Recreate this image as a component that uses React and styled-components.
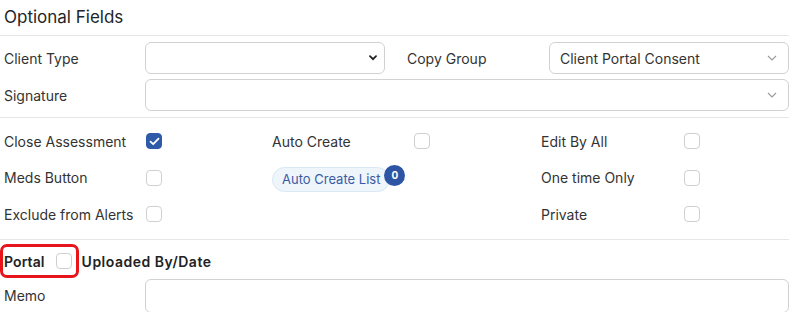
import React from 'react'
import styled, { createGlobalStyle } from 'styled-components'

const GlobalStyle = createGlobalStyle`
  * { box-sizing: border-box; }
  body {
    margin: 0;
    background: #ffffff;
    font-family: Inter, "Noto Sans", sans-serif;
    color: #333333;
    overflow: hidden;
  }
`

const Panel = styled.div`
  width: 792px;
  height: 312px;
  padding: 0 3px 0 0;
`

const Title = styled.h2`
  margin: 0;
  height: 36px;
  padding: 7px 0 0 4px;
  font-size: 17px;
  font-weight: 400;
  color: #212529;
  border-bottom: 1px solid #e6e6e6;
`

const FieldGrid = styled.div`
  display: grid;
  grid-template-columns: 141px 240px 164px 240px;
  row-gap: 5px;
  padding: 6px 0 6px 4px;
  border-bottom: 1px solid #e6e6e6;
`

const Label = styled.span`
  display: flex;
  align-items: center;
  font-size: 14px;
  color: #333;
  padding-left: ${({ $indent }) => $indent || 0}px;
  width: ${({ $w }) => ($w ? `${$w}px` : 'auto')};
  flex-shrink: 0;
`

const SelectBox = styled.div`
  grid-column: ${({ $span }) => $span || 'auto'};
  height: 32px;
  border: 1px solid #d2d2d2;
  border-radius: 6px;
  background: #fff;
  display: flex;
  align-items: center;
  justify-content: space-between;
  padding: 0 ${({ $pr }) => $pr || 11}px 0 10px;
  font-size: 14px;
  color: #333;
`

const CheckSection = styled.div`
  display: grid;
  grid-template-columns: 268px 269px 1fr;
  grid-auto-rows: 36.5px;
  padding: 5px 0 6px 4px;
  border-bottom: 1px solid #e6e6e6;
`

const Cell = styled.div`
  display: flex;
  align-items: center;
`

const Box = styled.span`
  width: 16px;
  height: 16px;
  border-radius: 4px;
  border: 1px solid ${({ $on }) => ($on ? '#2f5aa8' : '#cfcfcf')};
  background: ${({ $on }) => ($on ? '#2f5aa8' : '#fff')};
  display: inline-flex;
  align-items: center;
  justify-content: center;
  flex-shrink: 0;
`

const Pill = styled.span`
  position: relative;
  display: inline-flex;
  align-items: center;
  height: 25px;
  padding: 0 9px 0 9px;
  border-radius: 13px;
  background: #eef5fb;
  border: 1px solid #d9e8f4;
  font-size: 13px;
  color: #3b5ba5;
  margin-top: 3px;
`

const Badge = styled.span`
  position: absolute;
  top: -3px;
  right: -16px;
  width: 21px;
  height: 21px;
  border-radius: 50%;
  background: #2d55a4;
  color: #fff;
  font-size: 10px;
  font-weight: 700;
  display: flex;
  align-items: center;
  justify-content: center;
`

const PortalRow = styled.div`
  display: flex;
  align-items: center;
  gap: 3px;
  padding-top: 4px;
  height: 39px;
`

const Highlight = styled.div`
  display: inline-flex;
  align-items: center;
  height: 34px;
  border: 3px solid #e8141c;
  border-radius: 7px;
  padding: 0 4px 0 1px;
  gap: 11px;
`

const Strong = styled.span`
  font-size: 14px;
  font-weight: 600;
  color: #222;
  letter-spacing: ${({ $wide }) => ($wide ? '0.5px' : '0.1px')};
`

const MemoRow = styled.div`
  display: grid;
  grid-template-columns: 141px 1fr;
  padding-left: 4px;
  height: 33px;
`

const TextInput = styled.div`
  border: 1px solid #d2d2d2;
  border-radius: 6px;
  height: 34px;
  background: #fff;
`

const Chevron = ({ dark }) =>
  dark ? (
    <svg width="8" height="6" viewBox="0 0 8 6">
      <path d="M1 1.2 L4 4.2 L7 1.2" fill="none" stroke="#222" strokeWidth="1.8" strokeLinecap="round" />
    </svg>
  ) : (
    <svg width="10" height="6" viewBox="0 0 10 6">
      <path d="M1 1 L5 5 L9 1" fill="none" stroke="#9a9a9a" strokeWidth="1.1" />
    </svg>
  )

const Check = ({ on }) => (
  <Box $on={on}>
    {on && (
      <svg width="11" height="9" viewBox="0 0 11 9">
        <path d="M1.5 4.6 L4.2 7.2 L9.5 1.6" fill="none" stroke="#fff" strokeWidth="1.8" strokeLinecap="round" strokeLinejoin="round" />
      </svg>
    )}
  </Box>
)

const CheckField = ({ label, on, w = 142 }) => (
  <Cell>
    <Label $w={w}>{label}</Label>
    <Check on={on} />
  </Cell>
)

const App = () => {
  return (
    <Panel>
      <GlobalStyle />
      <Title>Optional Fields</Title>

      <FieldGrid>
        <Label>Client Type</Label>
        <SelectBox $pr={7}>
          <span />
          <Chevron dark />
        </SelectBox>
        <Label $indent={22}>Copy Group</Label>
        <SelectBox>
          <span>Client Portal Consent</span>
          <Chevron />
        </SelectBox>

        <Label>Signature</Label>
        <SelectBox $span="2 / 5">
          <span />
          <Chevron />
        </SelectBox>
      </FieldGrid>

      <CheckSection>
        <CheckField label="Close Assessment" on />
        <CheckField label="Auto Create" />
        <CheckField label="Edit By All" w={143} />

        <CheckField label="Meds Button" />
        <Cell>
          <Pill>
            Auto Create List
            <Badge>0</Badge>
          </Pill>
        </Cell>
        <CheckField label="One time Only" w={143} />

        <CheckField label="Exclude from Alerts" />
        <Cell />
        <CheckField label="Private" w={143} />
      </CheckSection>

      <PortalRow>
        <Highlight>
          <Strong>Portal</Strong>
          <Check />
        </Highlight>
        <Strong $wide>Uploaded By/Date</Strong>
      </PortalRow>

      <MemoRow>
        <Label>Memo</Label>
        <TextInput />
      </MemoRow>
    </Panel>
  )
}

export default App
